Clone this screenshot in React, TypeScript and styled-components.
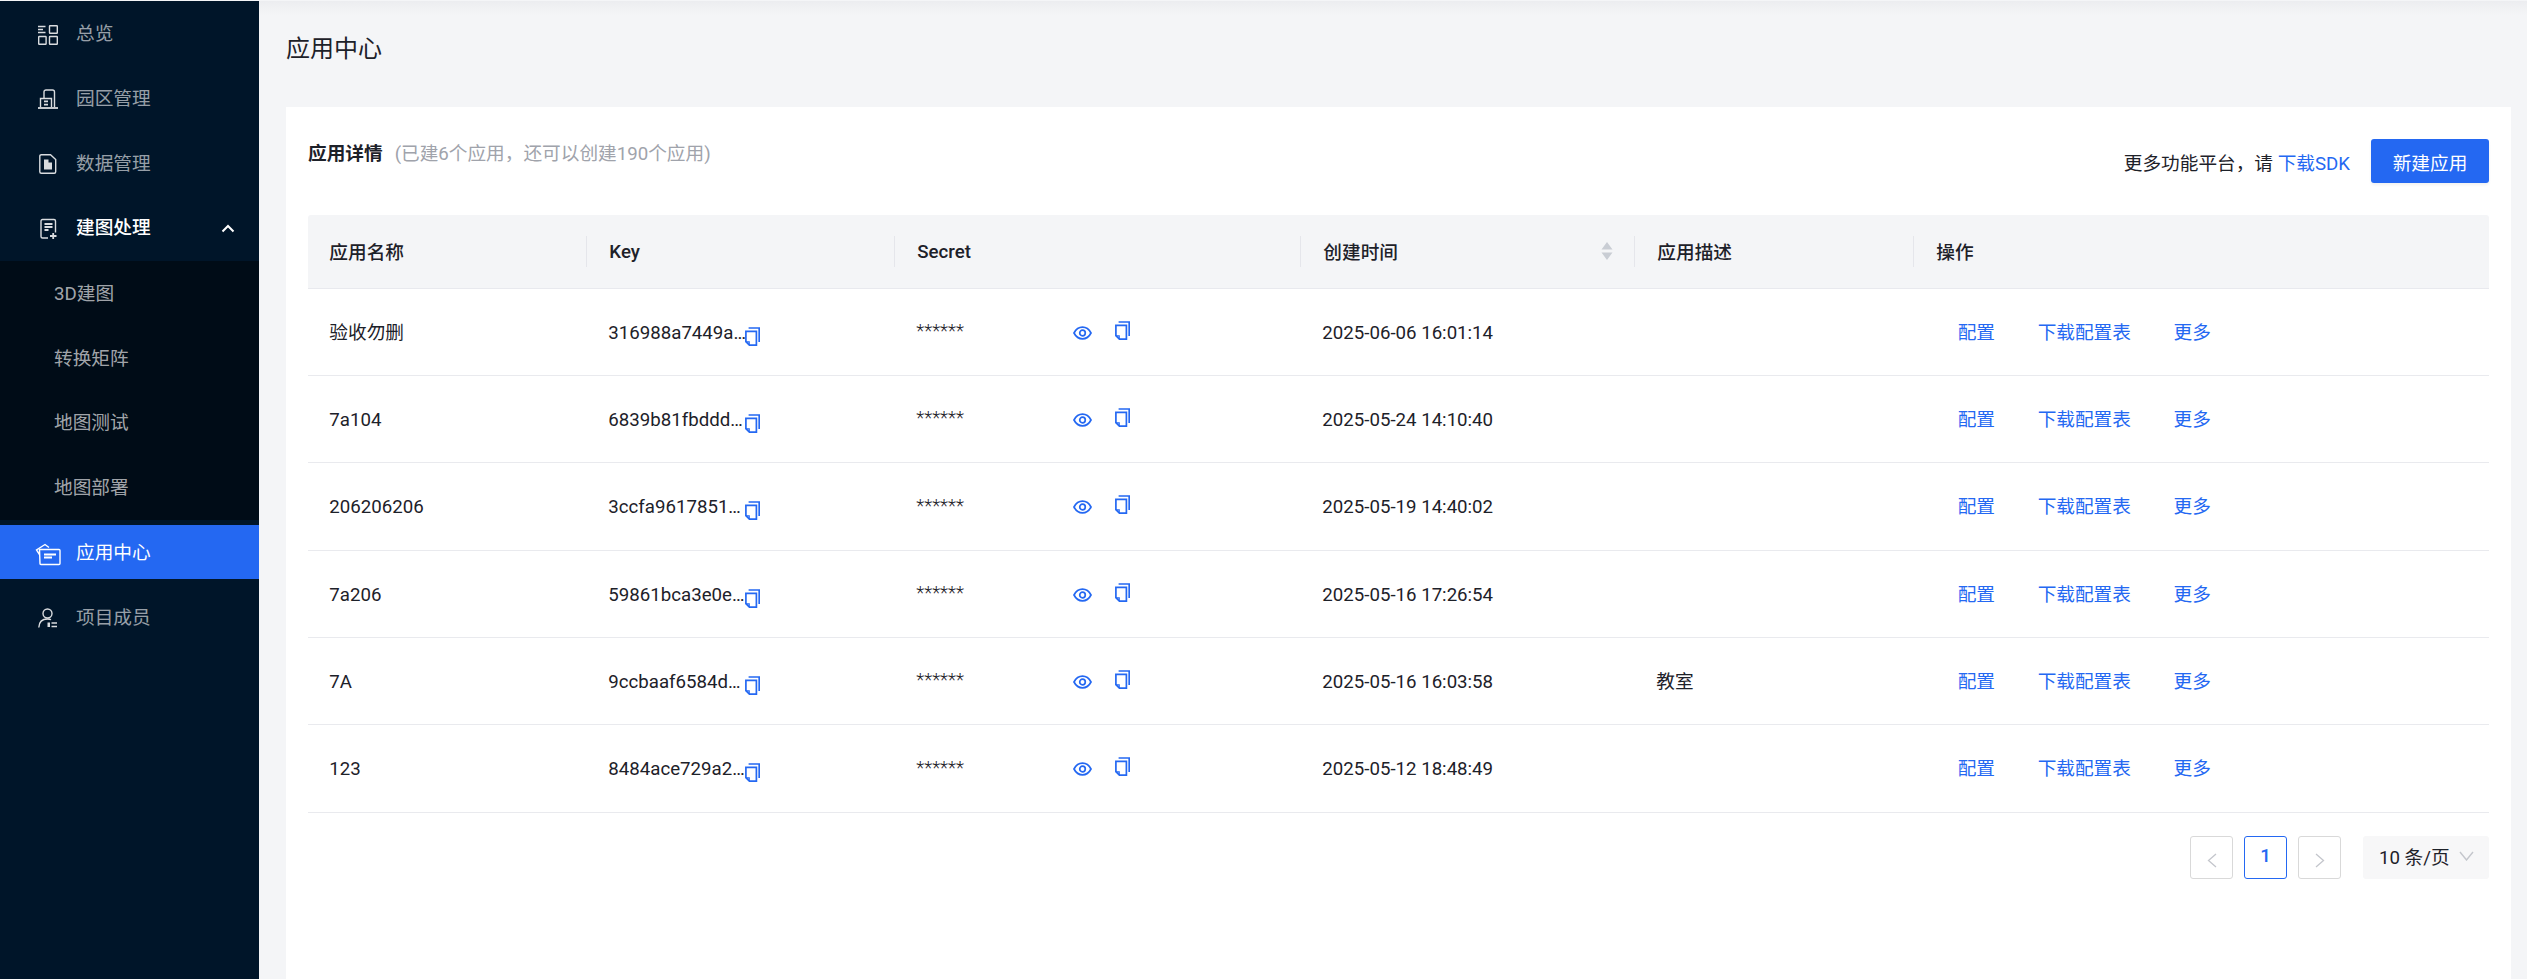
import React from "react";
import styled, { createGlobalStyle } from "styled-components";

const FONT = `Roboto, "Noto Sans CJK SC", sans-serif`;
const BLUE = "#2468f2";

const GlobalStyle = createGlobalStyle`
  html, body {
    margin: 0;
    padding: 0;
    height: 100%;
    overflow: hidden;
    background: #f4f5f7;
  }
  #root {
    height: 100%;
  }
  * {
    box-sizing: border-box;
  }
`;

const Layout = styled.div`
  display: flex;
  height: 979px;
  font-family: ${FONT};
  font-size: 18.67px;
  color: #1d2129;
`;

const Sidebar = styled.aside`
  flex: 0 0 259px;
  display: flex;
  flex-direction: column;
  margin-top: 1px;
  background: #001529;
`;

const MenuItem = styled.div<{ $active?: boolean; $open?: boolean }>`
  flex: none;
  display: flex;
  align-items: center;
  height: 54px;
  margin: 5.33px 0;
  padding: 0 0 3px 38px;
  gap: 18px;
  color: ${(p) =>
    p.$active || p.$open ? "#ffffff" : "rgba(255, 255, 255, 0.6)"};
  background: ${(p) => (p.$active ? BLUE : "transparent")};
  font-weight: ${(p) => (p.$open ? 500 : 400)};
`;

const MenuIcon = styled.svg`
  flex: 0 0 20px;
  width: 20px;
  height: 20px;
  margin-top: 6px;
  overflow: visible;
  fill: none;
  stroke: #ffffff;
  stroke-width: 1.4;
  opacity: ${(p) => p.opacity ?? 0.85};
`;

const Caret = styled.svg`
  width: 14px;
  height: 9px;
  margin-left: auto;
  margin-right: 24px;
  margin-top: 6px;
  fill: none;
  stroke: #ffffff;
  stroke-width: 2;
`;

const SubMenu = styled.div`
  flex: none;
  margin-top: 1.33px;
  padding: 5px 0 6px;
  background: #000c17;
`;

const SubItem = styled.div`
  display: flex;
  align-items: center;
  height: 54px;
  margin-bottom: 10.67px;
  padding: 0 0 3px 54px;
  color: rgba(255, 255, 255, 0.65);

  &:last-child {
    margin-bottom: 0;
  }
`;

const Main = styled.main`
  flex: 1;
  min-width: 0;
  display: flex;
  flex-direction: column;
  margin-top: 1px;
  padding: 0 16px 0 27px;
  background: linear-gradient(#ecedf0, #f4f5f7 14px);
`;

const PageTitle = styled.h1`
  flex: 0 0 106px;
  margin: 0;
  padding-top: 30px;
  font-size: 24px;
  line-height: 36px;
  font-weight: 400;
  color: #1d2129;
`;

const Card = styled.section`
  flex: 1;
  padding: 0 22px;
  background: #ffffff;
`;

const CardHead = styled.div`
  display: flex;
  justify-content: space-between;
  height: 108px;
  padding-top: 32px;
`;

const HeadTitle = styled.div`
  display: flex;
  gap: 12px;
  height: 30px;
  line-height: 30px;
`;

const Strong = styled.span`
  font-weight: 600;
  color: #1d2129;
`;

const Muted = styled.span`
  color: #a0a3ab;
`;

const HeadActions = styled.div`
  display: flex;
  align-items: center;
  height: 44px;
  gap: 21px;
`;

const Link = styled.span`
  color: ${BLUE};
`;

const PrimaryButton = styled.button`
  width: 118px;
  height: 44px;
  border: 0;
  border-radius: 3px;
  background: ${BLUE};
  color: #ffffff;
  font: inherit;
  box-shadow: 0 2px 3px rgba(0, 0, 0, 0.06);
`;

const COLUMNS = "279px 308px 406px 334px 279px 1fr";

const HeadRow = styled.div`
  display: grid;
  grid-template-columns: ${COLUMNS};
  align-items: center;
  height: 73.67px;
  border-bottom: 1px solid #e8e9ee;
  border-radius: 3px 3px 0 0;
  background: #f4f5f7;
  font-weight: 500;
`;

const HeadCell = styled.div<{ $divider?: boolean; $latin?: boolean }>`
  display: flex;
  align-items: center;
  justify-content: space-between;
  height: 31px;
  margin-left: ${(p) => (p.$divider ? "-1px" : "0")};
  padding: ${(p) => (p.$latin ? "2px 21.33px 0" : "0 21.33px 1px")};
  padding-left: ${(p) => (p.$divider ? "22.33px" : "21.33px")};
  border-left: ${(p) => (p.$divider ? "1px solid #e5e6eb" : "0")};
`;

const SortIcon = styled.svg`
  width: 12px;
  height: 18px;
  margin-right: 1px;
  fill: #c9cdd4;
`;

const Row = styled.div`
  display: grid;
  grid-template-columns: ${COLUMNS};
  align-items: center;
  height: 87.33px;
  border-bottom: 1px solid #e9eaee;
`;

const Cell = styled.div<{ $cjk?: boolean }>`
  display: flex;
  align-items: center;
  padding-left: 21.33px;
  padding-top: ${(p) => (p.$cjk ? "0" : "1.5px")};
  padding-bottom: ${(p) => (p.$cjk ? "3px" : "0")};
`;

const KeyText = styled.span`
  flex: none;
  width: 137px;
  white-space: nowrap;
`;

const Stars = styled.span`
  width: 157px;
  margin-bottom: 3px;
  font-weight: 300;
`;

const TinyIcon = styled.svg<{ $shift?: number; $gap?: number }>`
  flex: none;
  margin-top: ${(p) => p.$shift ?? 0}px;
  margin-left: ${(p) => p.$gap ?? 0}px;
  fill: none;
  stroke: ${BLUE};
  stroke-width: 1.7;
`;

const OpsCell = styled.div`
  display: flex;
  align-items: center;
  padding: 0 0 3px 22.33px;
`;

const OpButton = styled.span`
  padding: 0 21.33px;
  color: ${BLUE};
  white-space: nowrap;
`;

const Pager = styled.div`
  display: flex;
  justify-content: flex-end;
  align-items: center;
  gap: 11px;
  margin-top: 23px;
`;

const PageBox = styled.div<{ $current?: boolean }>`
  display: flex;
  align-items: center;
  justify-content: center;
  width: 43px;
  height: 43px;
  padding-bottom: ${(p) => (p.$current ? "3px" : "0")};
  border: 1px solid ${(p) => (p.$current ? BLUE : "#d9d9d9")};
  border-radius: 3px;
  color: ${BLUE};
  font-weight: 500;
`;

const PageArrow = styled.svg`
  width: 10px;
  height: 15px;
  margin-top: 7px;
  fill: none;
  stroke: #c4c6cc;
  stroke-width: 1.3;
`;

const SizeSelect = styled.div`
  display: flex;
  align-items: center;
  width: 126px;
  height: 43px;
  margin-left: 11px;
  padding: 0 0 3px 16px;
  gap: 9px;
  border-radius: 3px;
  background: #f7f7f8;
  color: #1d2129;
`;

const SelectArrow = styled.svg`
  width: 15px;
  height: 10px;
  fill: none;
  stroke: #c4c6cc;
  stroke-width: 1.4;
`;

const CopyIcon = ({ shift, gap }: { shift?: number; gap?: number }) => (
  <TinyIcon width="15" height="19" viewBox="0 0 15 19" $shift={shift} $gap={gap}>
    <path d="M.9 4.4h10.5v13.7H4.4L.9 14.6z" />
    <path d="M3.6 1h10.600v14" />
    <path d="M4.200 18v-3.200H.9" strokeWidth="1.2" />
  </TinyIcon>
);

const EyeIcon = () => (
  <TinyIcon width="19" height="14" viewBox="0 0 19 14" $gap={0}>
    <path d="M1 7c2-3.900 4.900-5.900 8.500-5.900S16 3.100 18 7c-2 3.900-4.900 5.900-8.500 5.900S3 10.900 1 7z" />
    <circle cx="9.500" cy="7" r="2.800" />
  </TinyIcon>
);

const OverviewIcon = () => (
  <MenuIcon viewBox="0 0 20 20">
    <path d="M0 1.500h7.500M0 4.500h5M0 7.500h7.500" />
    <rect x="11.500" y=".7" width="7.800" height="7.600" rx=".5" />
    <rect x=".7" y="11.500" width="7.400" height="7.800" rx=".5" />
    <rect x="11.500" y="11.500" width="7.800" height="7.800" rx=".5" />
  </MenuIcon>
);

const ParkIcon = () => (
  <MenuIcon viewBox="0 0 20 20">
    <path d="M0 19h20" strokeWidth="1.800" />
    <path d="M2.500 18V9.500h11V18" />
    <path d="M6 9V3c0-1.200.8-2 2-2h6.500c1.200 0 2 .8 2 2v15" />
    <path d="M6 11.500h4v1.800H6zM6 14.800h4v1.800H6z" fill="#fff" stroke="none" />
  </MenuIcon>
);

const DataIcon = () => (
  <MenuIcon viewBox="0 0 20 20">
    <path d="M3.300 .7h9.200l5.200 4.800v12.300c0 .9-.6 1.500-1.500 1.500H3.300c-.9 0-1.500-.6-1.500-1.500V2.200c0-.9.6-1.500 1.500-1.500z" />
    <path d="M6 5.500h4.500v3H14v7H6z" fill="#fff" stroke="none" />
  </MenuIcon>
);

const BuildIcon = () => (
  <MenuIcon viewBox="0 0 20 20">
    <path d="M10 19H4.500c-.9 0-1.500-.6-1.500-1.500V2c0-.9.6-1.500 1.500-1.500H16c.9 0 1.500.6 1.500 1.500v11.500" />
    <path d="M6.500 5h8M6.500 8h8M6.500 11h4" strokeWidth="1.800" />
    <path d="M12 17h6.500M15.200 14v6" strokeWidth="1.800" />
  </MenuIcon>
);

const AppIcon = () => (
  <MenuIcon viewBox="0 0 20 20" opacity={1}>
    <path d="M1.500 10.500-1.500 6 7 .5 11 3.500" />
    <path d="M1.500 5.500h19.500c.6 0 1 .4 1 1v13c0 .6-.4 1-1 1H3c-.6 0-1-.4-1-1z" />
    <path d="M6 10.500h12M6 13.500h8" strokeWidth="1.800" />
  </MenuIcon>
);

const MemberIcon = () => (
  <MenuIcon viewBox="0 0 20 20">
    <circle cx="9.500" cy="5.500" r="4.500" />
    <path d="M.8 19.500C1 14.500 4 11 9.500 11c1.500 0 2.500.2 3.500.7" />
    <path d="M9.500 14.500h2.500v4.500H9.500z" fill="#fff" stroke="none" />
    <path d="M13.500 15h5.500M13.500 18.500h5.500" strokeWidth="1.500" />
  </MenuIcon>
);

const subMenus = ["3D建图", "转换矩阵", "地图测试", "地图部署"];

const apps = [
  { name: "验收勿删", cjk: true, key: "316988a7449a…", time: "2025-06-06 16:01:14", desc: "" },
  { name: "7a104", key: "6839b81fbddd…", time: "2025-05-24 14:10:40", desc: "" },
  { name: "206206206", key: "3ccfa9617851…", time: "2025-05-19 14:40:02", desc: "" },
  { name: "7a206", key: "59861bca3e0e…", time: "2025-05-16 17:26:54", desc: "" },
  { name: "7A", key: "9ccbaaf6584d…", time: "2025-05-16 16:03:58", desc: "教室" },
  { name: "123", key: "8484ace729a2…", time: "2025-05-12 18:48:49", desc: "" },
];

const App: React.FC = () => {
  return (
    <>
      <GlobalStyle />
      <Layout>
        <Sidebar>
          <MenuItem>
            <OverviewIcon />
            总览
          </MenuItem>
          <MenuItem>
            <ParkIcon />
            园区管理
          </MenuItem>
          <MenuItem>
            <DataIcon />
            数据管理
          </MenuItem>
          <MenuItem $open>
            <BuildIcon />
            建图处理
            <Caret viewBox="0 0 14 9">
              <path d="M1.500 7.500 7 2l5.500 5.500" />
            </Caret>
          </MenuItem>
          <SubMenu>
            {subMenus.map((label) => (
              <SubItem key={label}>{label}</SubItem>
            ))}
          </SubMenu>
          <MenuItem $active>
            <AppIcon />
            应用中心
          </MenuItem>
          <MenuItem>
            <MemberIcon />
            项目成员
          </MenuItem>
        </Sidebar>
        <Main>
          <PageTitle>应用中心</PageTitle>
          <Card>
            <CardHead>
              <HeadTitle>
                <Strong>应用详情</Strong>
                <Muted>(已建6个应用，还可以创建190个应用)</Muted>
              </HeadTitle>
              <HeadActions>
                <span>
                  更多功能平台，请 <Link>下载SDK</Link>
                </span>
                <PrimaryButton>新建应用</PrimaryButton>
              </HeadActions>
            </CardHead>
            <HeadRow>
              <HeadCell>应用名称</HeadCell>
              <HeadCell $divider $latin>Key</HeadCell>
              <HeadCell $divider $latin>Secret</HeadCell>
              <HeadCell $divider>
                创建时间
                <SortIcon viewBox="0 0 12 18">
                  <path d="M6 0l5.500 7.500H.5zM6 18 .5 10.500h11z" />
                </SortIcon>
              </HeadCell>
              <HeadCell $divider>应用描述</HeadCell>
              <HeadCell $divider>操作</HeadCell>
            </HeadRow>
            {apps.map((app) => (
              <Row key={app.key}>
                <Cell $cjk={app.cjk}>{app.name}</Cell>
                <Cell>
                  <KeyText>{app.key}</KeyText>
                  <CopyIcon shift={7} />
                </Cell>
                <Cell>
                  <Stars>******</Stars>
                  <EyeIcon />
                  <CopyIcon shift={-5} gap={23} />
                </Cell>
                <Cell>{app.time}</Cell>
                <Cell $cjk>{app.desc}</Cell>
                <OpsCell>
                  <OpButton>配置</OpButton>
                  <OpButton>下载配置表</OpButton>
                  <OpButton>更多</OpButton>
                </OpsCell>
              </Row>
            ))}
            <Pager>
              <PageBox>
                <PageArrow viewBox="0 0 10 15">
                  <path d="M9 1 1.500 7.500 9 14" />
                </PageArrow>
              </PageBox>
              <PageBox $current>1</PageBox>
              <PageBox>
                <PageArrow viewBox="0 0 10 15">
                  <path d="M1 1l7.500 6.500L1 14" />
                </PageArrow>
              </PageBox>
              <SizeSelect>
                10 条/页
                <SelectArrow viewBox="0 0 15 10">
                  <path d="M1 1l6.500 8L14 1" />
                </SelectArrow>
              </SizeSelect>
            </Pager>
          </Card>
        </Main>
      </Layout>
    </>
  );
};

export default App;
